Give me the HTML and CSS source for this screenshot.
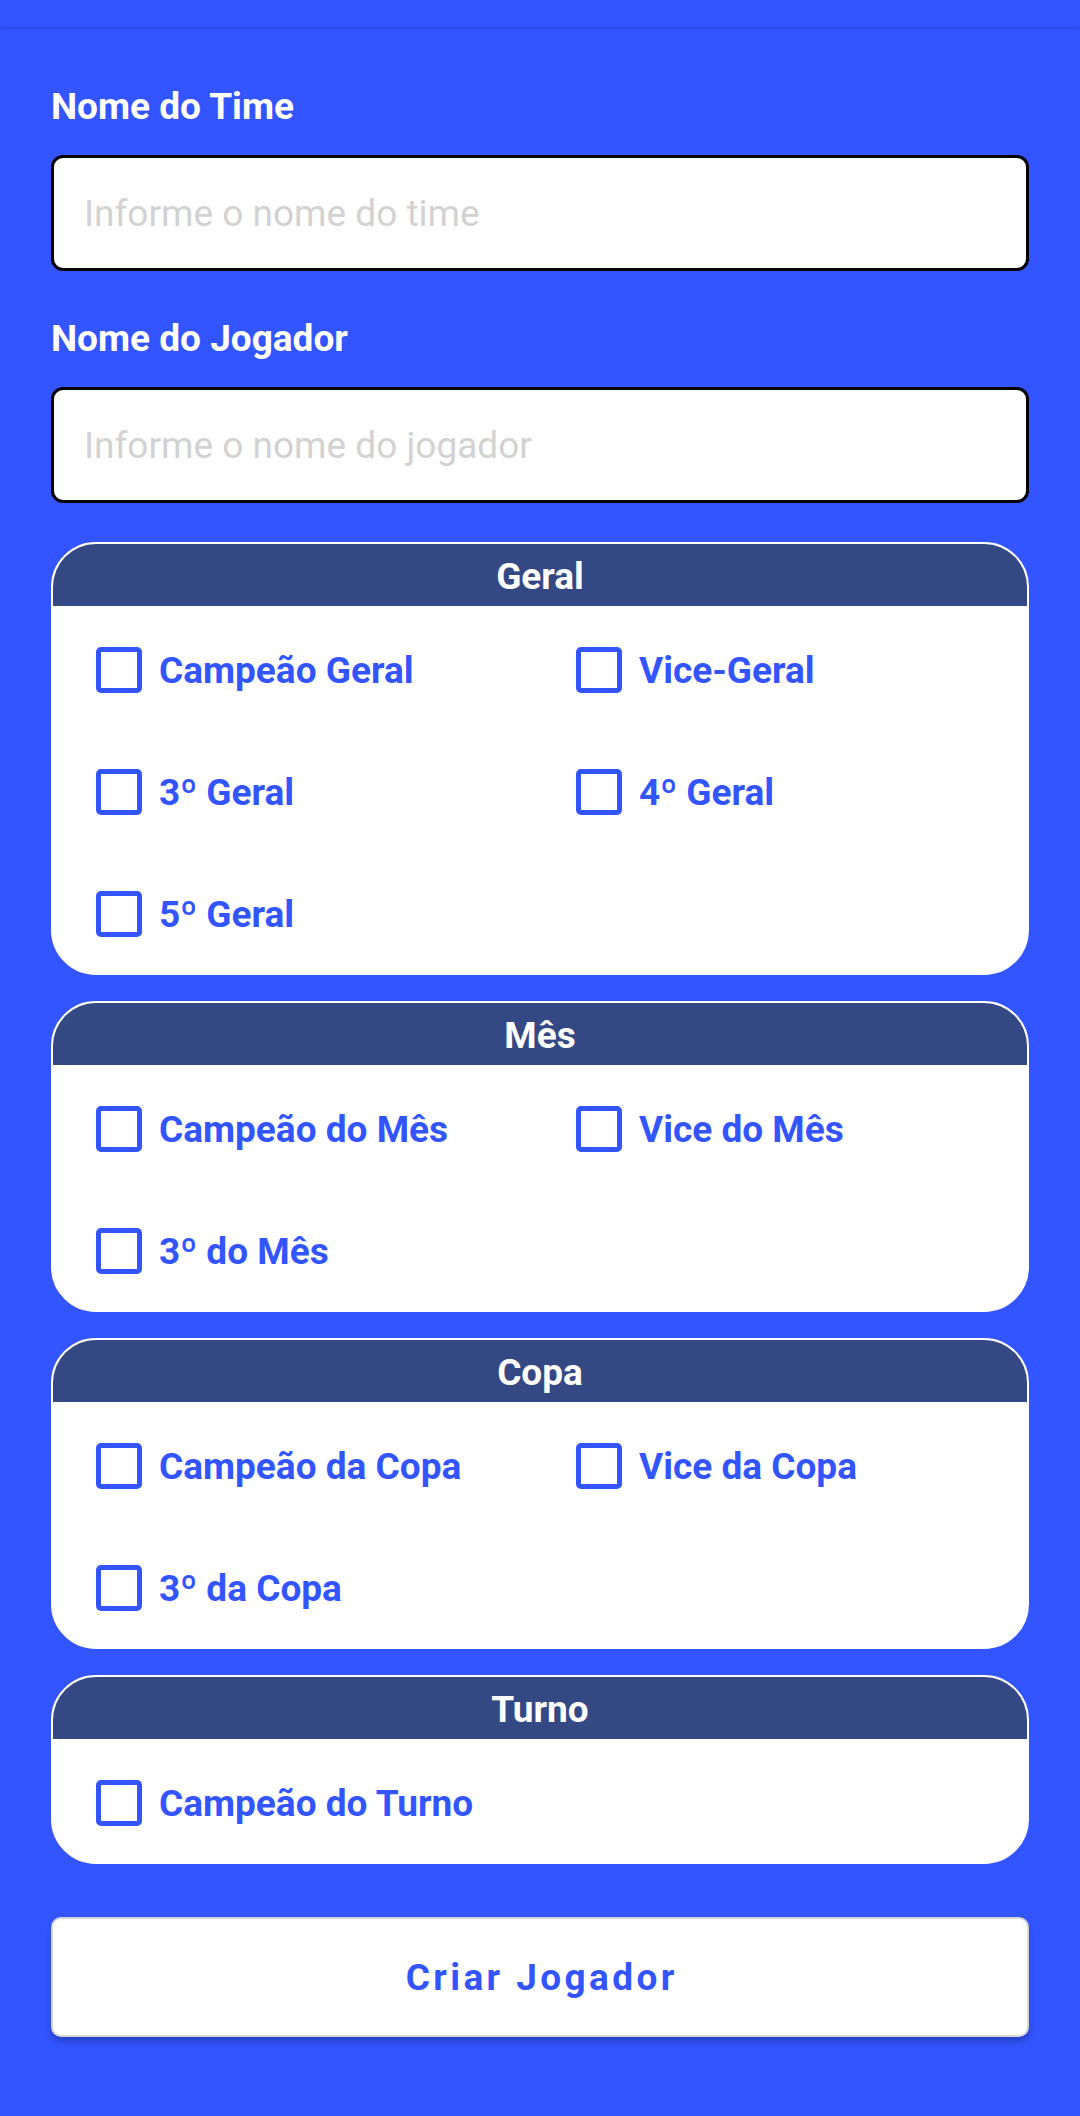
FILE: index.html
```html
<!DOCTYPE html>
<html lang="pt-BR">
<head>
<meta charset="utf-8">
<title>Criar Jogador</title>
<link rel="stylesheet" href="styles.css">
</head>
<body>
<div class="topbar"></div>
<main class="form">
  <label class="field-label first" for="time">Nome do Time</label>
  <input class="text-input" id="time" type="text" placeholder="Informe o nome do time">

  <label class="field-label" for="jogador">Nome do Jogador</label>
  <input class="text-input" id="jogador" type="text" placeholder="Informe o nome do jogador">

  <section class="card card-first">
    <div class="card-header">Geral</div>
    <div class="card-body">
      <label class="option"><span class="box"></span><span class="option-text">Campeão Geral</span></label>
      <label class="option"><span class="box"></span><span class="option-text">Vice-Geral</span></label>
      <label class="option"><span class="box"></span><span class="option-text">3º Geral</span></label>
      <label class="option"><span class="box"></span><span class="option-text">4º Geral</span></label>
      <label class="option"><span class="box"></span><span class="option-text">5º Geral</span></label>
    </div>
  </section>

  <section class="card">
    <div class="card-header">Mês</div>
    <div class="card-body">
      <label class="option"><span class="box"></span><span class="option-text">Campeão do Mês</span></label>
      <label class="option"><span class="box"></span><span class="option-text">Vice do Mês</span></label>
      <label class="option"><span class="box"></span><span class="option-text">3º do Mês</span></label>
    </div>
  </section>

  <section class="card">
    <div class="card-header">Copa</div>
    <div class="card-body">
      <label class="option"><span class="box"></span><span class="option-text">Campeão da Copa</span></label>
      <label class="option"><span class="box"></span><span class="option-text">Vice da Copa</span></label>
      <label class="option"><span class="box"></span><span class="option-text">3º da Copa</span></label>
    </div>
  </section>

  <section class="card">
    <div class="card-header">Turno</div>
    <div class="card-body">
      <label class="option"><span class="box"></span><span class="option-text">Campeão do Turno</span></label>
    </div>
  </section>

  <button class="submit" type="button">Criar Jogador</button>
</main>
</body>
</html>
```

FILE: styles.css
```css
* {
  box-sizing: border-box;
}

html, body {
  margin: 0;
  padding: 0;
}

body {
  background: #3355ff;
  font-family: Roboto, "Noto Sans", "Liberation Sans", sans-serif;
  min-height: 2116px;
}

.topbar {
  height: 27px;
  background: #3355ff;
  box-shadow: 0 1px 3px rgba(0, 0, 0, 0.18);
  position: relative;
}

.form {
  display: flex;
  flex-direction: column;
  padding: 0 51px;
}

.field-label {
  display: block;
  color: #ffffff;
  font-weight: 700;
  font-size: 37px;
  line-height: 42px;
  margin-top: 47px;
  margin-bottom: 27px;
}

.field-label.first {
  margin-top: 59px;
  margin-bottom: 27px;
}

.text-input {
  display: block;
  width: 100%;
  height: 116px;
  border: 3px solid #000000;
  border-radius: 12px;
  background: #ffffff;
  padding: 0 30px;
  font-family: Roboto, "Noto Sans", sans-serif;
  font-size: 37px;
  color: #222222;
  outline: none;
}

.text-input::placeholder {
  color: #d2d2d2;
}

.card {
  margin-top: 26px;
  background: #ffffff;
  border: 2px solid #ffffff;
  border-radius: 45px;
  overflow: hidden;
}

.card-first {
  margin-top: 39px;
}

.card-header {
  height: 62px;
  padding-top: 3px;
  background: #344884;
  color: #ffffff;
  font-weight: 700;
  font-size: 37px;
  line-height: 59px;
  text-align: center;
}

.card-body {
  display: grid;
  grid-template-columns: 1fr 1fr;
  grid-auto-rows: 118px;
  row-gap: 4px;
  padding: 5px 7px 0 7px;
}

.option {
  display: flex;
  align-items: center;
  padding-left: 36px;
  gap: 17px;
  color: #3355ff;
  font-weight: 700;
  font-size: 37px;
  line-height: 42px;
  white-space: nowrap;
}

.option-text {
  padding-top: 2px;
}

.box {
  flex: 0 0 auto;
  width: 46px;
  height: 46px;
  border: 5px solid #3355ff;
  border-radius: 5px;
  background: #ffffff;
}

.submit {
  margin-top: 53px;
  height: 120px;
  width: 100%;
  background: #ffffff;
  border: 2px solid #d6d6d6;
  border-radius: 10px;
  box-shadow: 0 5px 6px rgba(0, 0, 0, 0.22);
  color: #3355ff;
  font-family: Roboto, "Noto Sans", sans-serif;
  font-weight: 700;
  font-size: 37px;
  letter-spacing: 3.4px;
  text-indent: 3.4px;
  cursor: pointer;
}
```
